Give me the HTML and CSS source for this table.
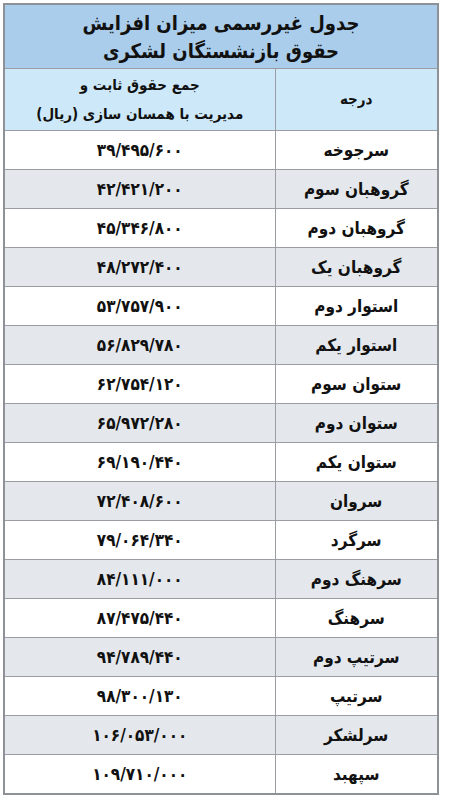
FILE: index.html
```html
<!DOCTYPE html>
<html lang="fa" dir="rtl">
<head>
<meta charset="utf-8">
<link rel="stylesheet" href="styles.css">
</head>
<body>
<table class="sheet">
  <colgroup><col class="c-rank"><col class="c-num"></colgroup>
  <tr class="title-row"><td colspan="2" class="title">جدول غیررسمی میزان افزایش<br>حقوق بازنشستگان لشکری</td></tr>
  <tr class="head-row">
    <td class="head">درجه</td>
    <td class="head">جمع حقوق ثابت و<br>مدیریت با همسان سازی (ریال)</td>
  </tr>
  <tr class="row"><td class="rank">سرجوخه</td><td class="num">۳۹/۴۹۵/۶۰۰</td></tr>
  <tr class="row alt"><td class="rank">گروهبان سوم</td><td class="num">۴۲/۴۲۱/۲۰۰</td></tr>
  <tr class="row"><td class="rank">گروهبان دوم</td><td class="num">۴۵/۳۴۶/۸۰۰</td></tr>
  <tr class="row alt"><td class="rank">گروهبان یک</td><td class="num">۴۸/۲۷۲/۴۰۰</td></tr>
  <tr class="row"><td class="rank">استوار دوم</td><td class="num">۵۳/۷۵۷/۹۰۰</td></tr>
  <tr class="row alt"><td class="rank">استوار یکم</td><td class="num">۵۶/۸۲۹/۷۸۰</td></tr>
  <tr class="row"><td class="rank">ستوان سوم</td><td class="num">۶۲/۷۵۴/۱۲۰</td></tr>
  <tr class="row alt"><td class="rank">ستوان دوم</td><td class="num">۶۵/۹۷۲/۲۸۰</td></tr>
  <tr class="row"><td class="rank">ستوان یکم</td><td class="num">۶۹/۱۹۰/۴۴۰</td></tr>
  <tr class="row alt"><td class="rank">سروان</td><td class="num">۷۲/۴۰۸/۶۰۰</td></tr>
  <tr class="row"><td class="rank">سرگرد</td><td class="num">۷۹/۰۶۴/۳۴۰</td></tr>
  <tr class="row alt"><td class="rank">سرهنگ دوم</td><td class="num">۸۴/۱۱۱/۰۰۰</td></tr>
  <tr class="row"><td class="rank">سرهنگ</td><td class="num">۸۷/۴۷۵/۴۴۰</td></tr>
  <tr class="row alt"><td class="rank">سرتیپ دوم</td><td class="num">۹۴/۷۸۹/۴۴۰</td></tr>
  <tr class="row"><td class="rank">سرتیپ</td><td class="num">۹۸/۳۰۰/۱۳۰</td></tr>
  <tr class="row alt"><td class="rank">سرلشکر</td><td class="num">۱۰۶/۰۵۳/۰۰۰</td></tr>
  <tr class="row"><td class="rank">سپهبد</td><td class="num">۱۰۹/۷۱۰/۰۰۰</td></tr>
</table>
</body>
</html>
```

FILE: styles.css
```css
html, body {
  margin: 0;
  padding: 0;
  background: #ffffff;
}
body {
  padding: 3px 0 0 3px;
  direction: ltr;
  font-family: "DejaVu Sans Condensed", "DejaVu Sans", sans-serif;
}
.sheet {
  direction: rtl;
  border-collapse: collapse;
  width: 434px;
  table-layout: fixed;
  border: 2px solid #8e9296;
}
.c-rank {
  width: 163px;
}
.c-num {
  width: 271px;
}
.sheet td {
  border: 1px solid #9a9ea2;
  text-align: center;
  vertical-align: middle;
  padding: 0;
  color: #111;
}
.title {
  background: #a9cdeb;
  height: 63px;
  font-size: 20px;
  font-weight: bold;
  line-height: 28px;
}
.head {
  background: #cde9f9;
  height: 61px;
  font-size: 15px;
  font-weight: bold;
  line-height: 29px;
}
.row td {
  height: 38px;
}
.row.alt td {
  background: #e4e8ec;
}
.rank {
  font-size: 17px;
  font-weight: bold;
}
.num {
  font-size: 17px;
  font-weight: bold;
}
```
